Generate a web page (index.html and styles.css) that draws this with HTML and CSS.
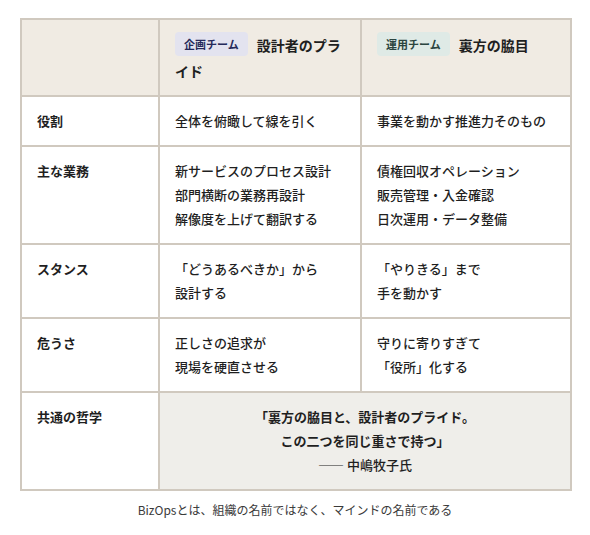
FILE: index.html
```html
<!DOCTYPE html>
<html lang="ja">
<head>
<meta charset="utf-8">
<link rel="stylesheet" href="styles.css">
</head>
<body>
<div class="wrap">
  <table class="cmp">
    <colgroup>
      <col class="c1"><col class="c2"><col class="c3">
    </colgroup>
    <thead>
      <tr>
        <th class="corner"></th>
        <th><span class="badge badge-plan">企画チーム</span>設計者のプラ<br>イド</th>
        <th><span class="badge badge-ops">運用チーム</span>裏方の脇目</th>
      </tr>
    </thead>
    <tbody>
      <tr>
        <td class="label">役割</td>
        <td>全体を俯瞰して線を引く</td>
        <td>事業を動かす推進力そのもの</td>
      </tr>
      <tr>
        <td class="label">主な業務</td>
        <td>新サービスのプロセス設計<br>部門横断の業務再設計<br>解像度を上げて翻訳する</td>
        <td>債権回収オペレーション<br>販売管理・入金確認<br>日次運用・データ整備</td>
      </tr>
      <tr>
        <td class="label">スタンス</td>
        <td>「どうあるべきか」から<br>設計する</td>
        <td>「やりきる」まで<br>手を動かす</td>
      </tr>
      <tr>
        <td class="label">危うさ</td>
        <td>正しさの追求が<br>現場を硬直させる</td>
        <td>守りに寄りすぎて<br>「役所」化する</td>
      </tr>
      <tr>
        <td class="label">共通の哲学</td>
        <td class="quote" colspan="2">「裏方の脇目と、設計者のプライド。<br>この二つを同じ重さで持つ」<br><span class="by">—— 中嶋牧子氏</span></td>
      </tr>
    </tbody>
  </table>
  <p class="caption">BizOpsとは、組織の名前ではなく、マインドの名前である</p>
</div>
</body>
</html>
```
FILE: styles.css
```css
html, body {
  margin: 0;
  padding: 0;
  background: #ffffff;
}
body {
  font-family: "Noto Sans CJK JP", "Noto Sans", sans-serif;
  color: #1f1f1f;
}
.wrap {
  padding: 18px 20px 0 20px;
}
.cmp {
  width: 550px;
  border-collapse: collapse;
  table-layout: fixed;
  font-size: 13px;
}
.c1 { width: 138px; }
.c2 { width: 202px; }
.c3 { width: 210px; }
.cmp th, .cmp td {
  border: 2px solid #d0c9bf;
  padding: 12px 15px;
  text-align: left;
  vertical-align: top;
  line-height: 24px;
  font-weight: 500;
}
.cmp thead th {
  background: #f0ebe3;
  font-weight: 700;
  font-size: 14px;
  line-height: 26px;
  padding: 12px 15px 11px;
}
.badge {
  display: inline-block;
  font-size: 11px;
  font-weight: 700;
  line-height: 24px;
  padding: 0 9px;
  border-radius: 4px;
  margin-right: 9px;
  vertical-align: top;
}
.badge-plan {
  background: #e3e3ef;
  color: #252a5a;
}
.badge-ops {
  background: #dfeae6;
  color: #2b4540;
}
.cmp td.label {
  font-weight: 700;
}
.cmp td.quote {
  background: #efeeea;
  text-align: center;
  font-weight: 700;
}
.by {
  font-weight: 500;
}
.caption {
  margin: 10px 0 0 0;
  width: 550px;
  text-align: center;
  font-size: 12px;
  line-height: 18px;
  color: #3a3a3a;
}
```
